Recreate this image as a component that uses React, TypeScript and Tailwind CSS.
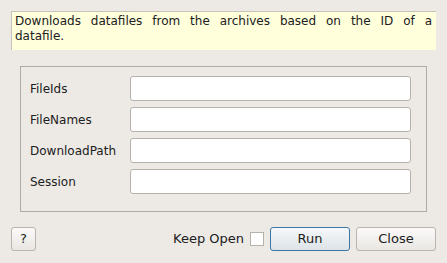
const FIELDS = ["FileIds", "FileNames", "DownloadPath", "Session"];

function Field({ label }: { label: string }) {
  return (
    <div className="flex h-[25px] items-center">
      <span className="w-[100px] shrink-0">{label}</span>
      <input
        type="text"
        className="h-[25px] w-[281px] rounded-[3px] border border-[#b5b1ab] bg-white outline-none"
      />
    </div>
  );
}

function Button({
  label,
  className,
  primary,
}: {
  label: string;
  className: string;
  primary?: boolean;
}) {
  return (
    <button
      type="button"
      className={`h-[24px] rounded-[3px] border bg-gradient-to-b text-[13px] ${
        primary
          ? "border-[#3b76a6] from-[#f6f8fa] to-[#dde3e8]"
          : "border-[#b8b4ae] from-[#fbfaf9] to-[#e9e6e2]"
      } ${className}`}
    >
      {label}
    </button>
  );
}

export default function App() {
  return (
    <div className="h-[263px] w-[447px] bg-[#edeae6] px-[11px] pt-[11px] font-['DejaVu_Sans',sans-serif] text-[12px] text-[#202020]">
      <div className="h-[39px] border-l border-t border-[#c6c2bc] bg-[#ffffdc] pl-[3px] pr-[4px] pt-[2px] leading-[15px]">
        <span className="block text-justify [text-align-last:justify]">
          Downloads datafiles from the archives based on the ID of a
        </span>
        <span className="block">datafile.</span>
      </div>

      <div className="mx-[9px] mt-[16px] flex h-[146px] flex-col gap-[6px] border border-[#aeaaa4] pl-[9px] pr-[15px] pt-[9px]">
        {FIELDS.map((f) => (
          <Field key={f} label={f} />
        ))}
      </div>

      <div className="mt-[15px] flex h-[24px] items-center">
        <Button label="?" className="w-[25px]" />
        <span className="ml-auto text-[13px]">Keep Open</span>
        <span className="ml-[6px] h-[14px] w-[14px] border border-[#b5b1ab] bg-white" />
        <Button label="Run" className="ml-[6px] w-[80px]" primary />
        <Button label="Close" className="ml-[6px] w-[80px]" />
      </div>
    </div>
  );
}
